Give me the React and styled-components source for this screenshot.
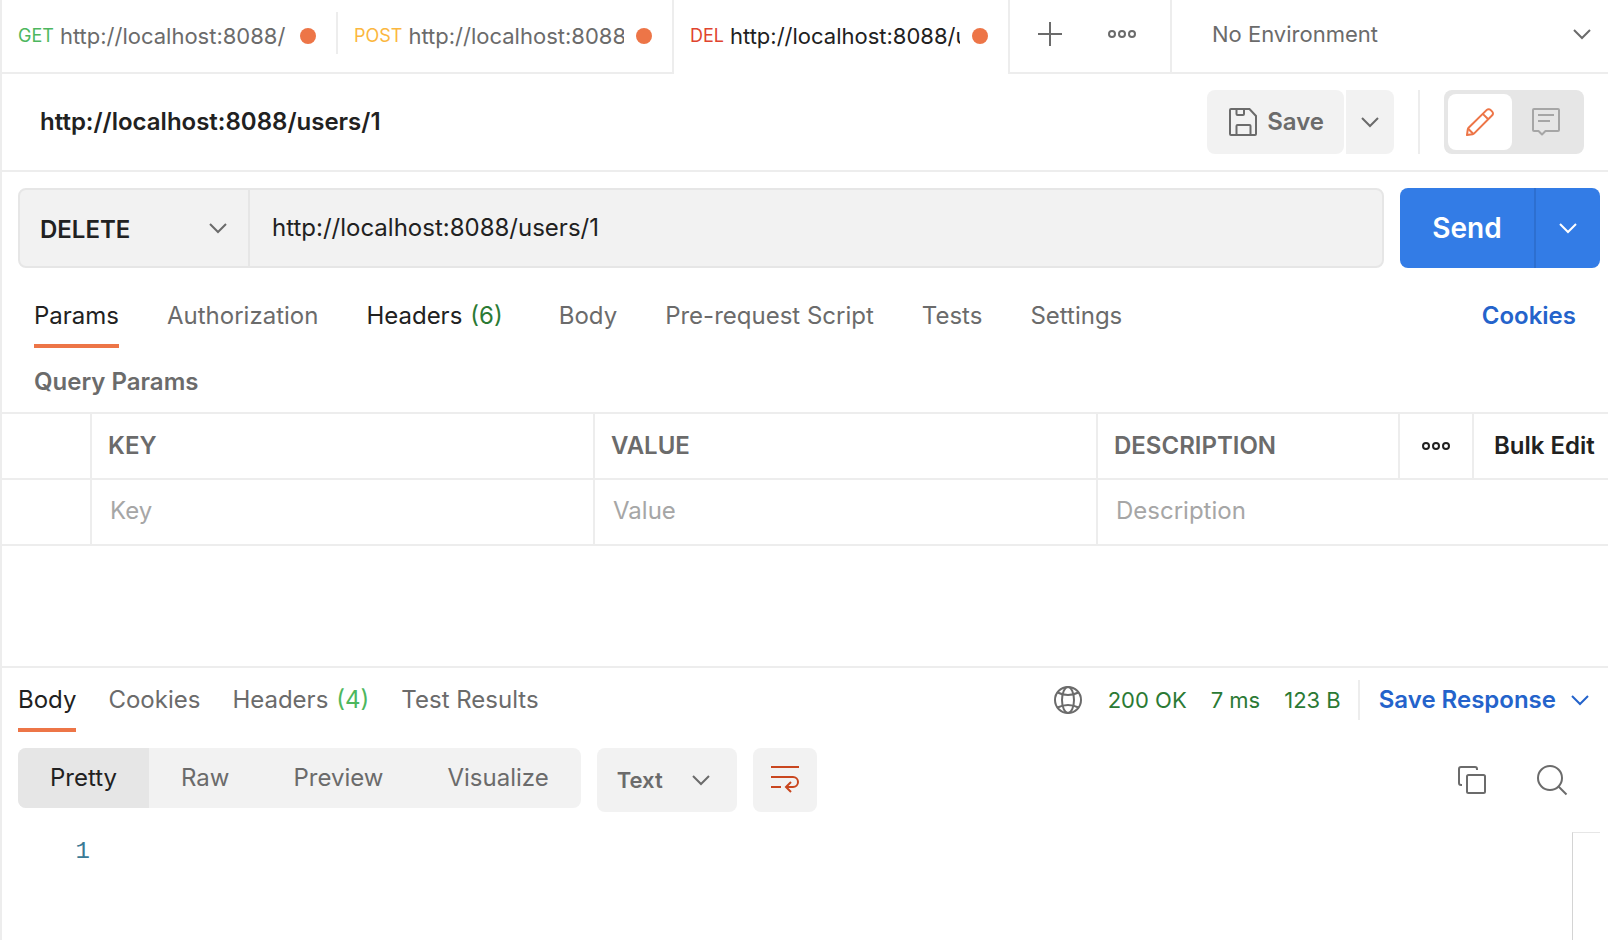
import { useState } from "react";
import styled, { createGlobalStyle } from "styled-components";

const GlobalStyle = createGlobalStyle`
  * {
    box-sizing: border-box;
  }
  body {
    margin: 0;
    background-color: #ffffff;
  }
  body, button, input, select, textarea {
    font-family: "Inter", "Liberation Sans", sans-serif;
    font-size: 24px;
    line-height: 32px;
    color: #212121;
  }
  button, input, select, textarea {
    margin: 0;
    padding: 0;
    border: none;
    border-radius: 0;
    outline: none;
    background-color: transparent;
  }
  button, select {
    cursor: pointer;
  }
  svg {
    display: block;
    flex-shrink: 0;
  }
`;

const Page = styled.div`
  min-height: 100vh;
  display: flex;
  flex-direction: column;
  border-left: 2px solid #ededed;
`;

/* ---------- top bar ---------- */

const TopBar = styled.header`
  display: flex;
  height: 74px;
`;

const Tab = styled.div`
  flex: 0 1 336px;
  min-width: 0;
  display: flex;
  box-shadow: ${(props) => (props.$active ? "none" : "inset 0 -2px #ededed")};
`;

const TabButton = styled.button`
  flex: 1;
  min-width: 0;
  display: flex;
  align-items: center;
  margin-bottom: 2px;
  padding: 0 20px 0 16px;
`;

const TabMethod = styled.span`
  font-size: 18px;
  color: ${(props) => props.$color};
`;

const TabUrl = styled.span`
  flex: 1;
  min-width: 0;
  margin: 0 12px 0 6px;
  overflow: hidden;
  white-space: nowrap;
  text-align: left;
  font-size: 22px;
  color: ${(props) => (props.$active ? "#212121" : "#6b6b6b")};
`;

const UnsavedDot = styled.span`
  width: 16px;
  height: 16px;
  border-radius: 50%;
  background-color: #ed7547;
`;

const TabDivider = styled.span`
  width: 2px;
  margin: ${(props) => (props.$short ? "12px 0 20px" : "0")};
  background-color: #ededed;
`;

const TabActions = styled.div`
  display: flex;
  align-items: center;
  gap: 24px;
  padding: 0 24px 4px 16px;
  border-right: 2px solid #ededed;
  border-bottom: 2px solid #ededed;
`;

const SmallIconButton = styled.button`
  width: 48px;
  height: 48px;
  display: flex;
  align-items: center;
  justify-content: center;
  color: #6b6b6b;
`;

const EnvironmentArea = styled.div`
  flex: 1;
  display: flex;
  padding-bottom: 4px;
  border-bottom: 2px solid #ededed;
`;

/* a native select with the chevron laid on its right end */
const SelectBox = styled.div`
  flex: ${(props) => (props.$grow ? 1 : "none")};
  display: grid;
  align-items: center;
  color: #6b6b6b;

  select,
  svg {
    grid-area: 1 / 1;
  }
  svg {
    justify-self: end;
    margin-right: ${(props) => props.$inset}px;
    pointer-events: none;
  }
`;

const EnvironmentSelect = styled.select`
  width: 100%;
  height: 100%;
  padding-left: 40px;
  appearance: none;
  font-size: 22px;
  color: #6b6b6b;
`;

/* ---------- request ---------- */

const RequestHeader = styled.div`
  display: flex;
  align-items: center;
  gap: 24px;
  height: 98px;
  padding: 0 24px 0 38px;
  border-bottom: 2px solid #ededed;
`;

const RequestTitle = styled.h1`
  flex: 1;
  margin: 0;
  font-size: 24px;
  font-weight: 600;
`;

const SaveGroup = styled.div`
  display: flex;
  gap: 2px;
`;

const SaveButton = styled.button`
  display: flex;
  align-items: center;
  gap: 8px;
  height: 64px;
  padding: 0 20px;
  border-radius: 8px;
  background-color: #f2f2f2;
  color: #6b6b6b;
  font-weight: 600;
`;

const SaveMore = styled.button`
  width: 48px;
  display: flex;
  align-items: center;
  justify-content: center;
  border-radius: 0 8px 8px 0;
  background-color: #f2f2f2;
  color: #6b6b6b;
`;

const HeaderDivider = styled.span`
  width: 2px;
  height: 64px;
  background-color: #ededed;
`;

const ModeToggle = styled.div`
  display: flex;
  width: 140px;
  height: 64px;
  padding: 4px;
  border-radius: 8px;
  background-color: #e6e6e6;
`;

const ModeButton = styled.button`
  flex: ${(props) => (props.$active ? "0 0 64px" : 1)};
  display: flex;
  align-items: center;
  justify-content: center;
  border-radius: 8px;
  background-color: ${(props) => (props.$active ? "#ffffff" : "transparent")};
  color: ${(props) => (props.$active ? "#ed7547" : "#a6a6a6")};
`;

const UrlRow = styled.form`
  display: flex;
  gap: 16px;
  padding: 16px 8px 16px 16px;
`;

const UrlBox = styled.div`
  flex: 1;
  display: flex;
  height: 80px;
  border: 2px solid #e6e6e6;
  border-radius: 8px;
  background-color: #f2f2f2;
`;

const MethodSelect = styled.select`
  width: 230px;
  height: 100%;
  padding: 4px 0 0 20px;
  border-right: 2px solid #e6e6e6;
  appearance: none;
  font-weight: 600;
`;

const UrlInput = styled.input`
  flex: 1;
  min-width: 0;
  padding: 0 22px;
`;

const SendGroup = styled.div`
  display: flex;
  border-radius: 8px;
  overflow: hidden;
  background-color: #337ce6;
`;

const SendButton = styled.button`
  width: 134px;
  color: #ffffff;
  font-size: 28px;
  font-weight: 600;
`;

const SendMore = styled.button`
  width: 66px;
  display: flex;
  align-items: center;
  justify-content: center;
  border-left: 2px solid #2d6fd0;
  color: #ffffff;
`;

const TabNav = styled.nav`
  display: flex;
  gap: ${(props) => props.$gap}px;
`;

const NavTab = styled.button`
  padding: 16px 0 12px;
  border-bottom: 4px solid
    ${(props) => (props.$active ? "#ed7547" : "transparent")};
  white-space: nowrap;
  color: ${(props) => (props.$active || props.$filled ? "#212121" : "#6b6b6b")};
`;

const Count = styled.span`
  margin: 0 ${(props) => (props.$wide ? 8 : 0)}px 0 8px;
  color: ${(props) => props.$color};
`;

const RequestTabs = styled.div`
  display: flex;
  justify-content: space-between;
  padding: 0 32px;
`;

const CookiesLink = styled.a`
  padding-top: 16px;
  font-weight: 600;
  text-decoration: none;
  color: #2463cb;
`;

const SectionTitle = styled.h2`
  margin: 0;
  padding: 18px 32px 14px;
  font-size: 24px;
  font-weight: 600;
  color: #6b6b6b;
`;

const ParamsTable = styled.table`
  width: 100%;
  margin-bottom: 120px;
  table-layout: fixed;
  border-spacing: 0;
  border-top: 2px solid #ededed;
`;

const Col = styled.col`
  width: ${(props) => (props.$width ? props.$width + "px" : "auto")};
`;

const HeadCell = styled.th`
  height: 66px;
  padding: ${(props) => (props.$plain ? "0" : "0 16px")};
  border-right: ${(props) => (props.$last ? "none" : "2px solid #ededed")};
  border-bottom: 2px solid #ededed;
  text-align: left;
  font-weight: 600;
  color: #6b6b6b;
`;

const BodyCell = styled.td`
  height: 66px;
  padding: 0;
  border-right: ${(props) => (props.$last ? "none" : "2px solid #ededed")};
  border-bottom: 2px solid #ededed;
`;

const CellInput = styled.input`
  display: block;
  width: 100%;
  height: 64px;
  padding: 0 18px 4px;

  &::placeholder {
    color: #a6a6a6;
    opacity: 1;
  }
`;

const ColumnsButton = styled.button`
  width: 100%;
  height: 64px;
  display: flex;
  align-items: center;
  justify-content: center;
  color: #212121;
`;

const BulkEdit = styled.button`
  padding-left: 20px;
  font-weight: 600;
  white-space: nowrap;
`;

/* ---------- response ---------- */

const Response = styled.section`
  flex: 1;
  display: flex;
  flex-direction: column;
  border-top: 2px solid #ededed;
`;

const ResponseTabs = styled.div`
  display: flex;
  justify-content: space-between;
  padding: 0 19px 0 16px;
`;

const ResponseMeta = styled.div`
  display: flex;
  align-items: center;
  height: 64px;
  gap: 24px;
  font-size: 22px;
  color: #6b6b6b;
`;

const Status = styled.span`
  white-space: nowrap;
  color: #2b7a34;
`;

const SaveResponse = styled.button`
  display: flex;
  align-items: center;
  gap: 15px;
  height: 40px;
  margin-left: -7px;
  padding-left: 19px;
  border-left: 2px solid #ededed;
  font-weight: 600;
  white-space: nowrap;
  color: #2463cb;
`;

const Toolbar = styled.div`
  display: flex;
  gap: 16px;
  padding: 16px 24px 20px 16px;
`;

const ViewSwitch = styled.div`
  display: flex;
  height: 60px;
  border-radius: 8px;
  overflow: hidden;
  background-color: #f2f2f2;
`;

const ViewButton = styled.button`
  padding: 0 32px;
  background-color: ${(props) => (props.$active ? "#e6e6e6" : "transparent")};
  color: ${(props) => (props.$active ? "#212121" : "#6b6b6b")};
`;

const FormatSelect = styled.select`
  width: 140px;
  height: 64px;
  padding-left: 20px;
  border-radius: 8px;
  background-color: #f2f2f2;
  appearance: none;
  font-size: 22px;
  font-weight: 600;
  color: #6b6b6b;
`;

const ToolButton = styled.button`
  width: 64px;
  height: 64px;
  display: flex;
  align-items: center;
  justify-content: center;
  border-radius: 8px;
  background-color: ${(props) => (props.$on ? "#f2f2f2" : "transparent")};
  color: ${(props) => (props.$on ? "#c9471f" : "#6b6b6b")};
`;

const Spacer = styled.span`
  flex: 1;
`;

const Editor = styled.div`
  flex: 1;
  display: flex;
  padding-right: 8px;
`;

const LineNumber = styled.span`
  width: 88px;
  text-align: right;
  font-family: "Liberation Mono", monospace;
  line-height: 40px;
  color: #3b7a95;
`;

const OverviewRuler = styled.div`
  width: 28px;
  margin-left: auto;
  border-top: 1px solid #e6e6e6;
  border-left: 1px solid #d4d4d4;
`;

/* ---------- icons ---------- */

function Icon({ children, box = "-2 -2 32 32", width = 32, height = 32 }) {
  return (
    <svg
      width={width}
      height={height}
      viewBox={box}
      fill="none"
      stroke="currentColor"
      strokeWidth="2"
      aria-hidden="true"
    >
      {children}
    </svg>
  );
}

const Chevron = () => (
  <Icon box="0 0 18 12" width={18} height={12}>
    <path d="M1 2l8 8 8-8" />
  </Icon>
);

const Dots = () => (
  <Icon box="0 0 28 8" width={28} height={8}>
    <circle cx="4" cy="4" r="3" />
    <circle cx="14" cy="4" r="3" />
    <circle cx="24" cy="4" r="3" />
  </Icon>
);

const PlusIcon = () => (
  <Icon box="0 0 24 24" width={24} height={24}>
    <path d="M12 0v24M0 12h24" />
  </Icon>
);

const SaveIcon = () => (
  <Icon>
    <path d="M2 1h18.500L27 8v18a1 1 0 0 1-1 1H2a1 1 0 0 1-1-1V2a1 1 0 0 1 1-1z" />
    <path d="M7.500 1v5a1 1 0 0 0 1 1H14a1 1 0 0 0 1-1V1" />
    <path d="M7.500 27v-9a1 1 0 0 1 1-1h12a1 1 0 0 1 1 1v9" />
  </Icon>
);

const PencilIcon = () => (
  <Icon>
    <path
      d="M1 27l.8-5.600a3 3 0 0 1 .8-1.600L20.800 1.900a2.600 2.600 0 0 1 3.700 0l1.700 1.700a2.600 2.600 0 0 1 0 3.700L8.200 25.400a3 3 0 0 1-1.600.8z"
      strokeLinejoin="round"
    />
    <path d="M16.800 5.900l5.400 5.400M2.200 20.800l5 5" />
  </Icon>
);

const CommentIcon = () => (
  <Icon>
    <path
      d="M2 1h24a1 1 0 0 1 1 1v20a1 1 0 0 1-1 1H13.500L10 26.500 6.500 23H2a1 1 0 0 1-1-1V2a1 1 0 0 1 1-1z"
      strokeLinejoin="round"
    />
    <path d="M6 7h16M6 13h12" />
  </Icon>
);

const GlobeIcon = () => (
  <Icon>
    <circle cx="14" cy="14" r="13" />
    <ellipse cx="14" cy="14" rx="6" ry="13" />
    <path d="M3.500 6.500Q14 11.500 24.500 6.500M3.500 21.500Q14 16.500 24.500 21.500" />
  </Icon>
);

const WrapIcon = () => (
  <Icon>
    <path d="M0 1h28M0 11h22a5 5 0 0 1 0 10h-7M0 21h10" />
    <path d="M20 16l-5 5 5 5" />
  </Icon>
);

const CopyIcon = () => (
  <Icon>
    <path d="M4 19H3a2 2 0 0 1-2-2V3a2 2 0 0 1 2-2h14a2 2 0 0 1 2 2v1" />
    <rect x="9" y="9" width="18" height="18" rx="1.500" />
  </Icon>
);

const SearchIcon = () => (
  <Icon box="-1 -1 32 32">
    <circle cx="13" cy="13" r="12" />
    <path d="M21.500 21.500l8 8" />
  </Icon>
);

/* ---------- data ---------- */

const tabs = [
  { method: "GET", color: "#4db75e", url: "http://localhost:8088/" },
  { method: "POST", color: "#fbb740", url: "http://localhost:8088/users" },
  { method: "DEL", color: "#e0442f", url: "http://localhost:8088/users/1" },
];

const requestTabs = [
  { name: "Params" },
  { name: "Authorization" },
  { name: "Headers", count: 6 },
  { name: "Body" },
  { name: "Pre-request Script" },
  { name: "Tests" },
  { name: "Settings" },
];

const responseTabs = [
  { name: "Body" },
  { name: "Cookies" },
  { name: "Headers", count: 4 },
  { name: "Test Results" },
];

const views = ["Pretty", "Raw", "Preview", "Visualize"];

function App() {
  const [activeTab, setActiveTab] = useState(2);
  const [requestTab, setRequestTab] = useState("Params");
  const [responseTab, setResponseTab] = useState("Body");
  const [view, setView] = useState("Pretty");
  const [url, setUrl] = useState("http://localhost:8088/users/1");

  return (
    <>
      <GlobalStyle />
      <Page>
        <TopBar>
          {tabs.map((tab, index) => (
            <Tab key={tab.method} $active={index === activeTab}>
              <TabButton onClick={() => setActiveTab(index)}>
                <TabMethod $color={tab.color}>{tab.method}</TabMethod>
                <TabUrl $active={index === activeTab}>{tab.url}</TabUrl>
                <UnsavedDot />
              </TabButton>
              <TabDivider
                $short={index !== activeTab && index + 1 !== activeTab}
              />
            </Tab>
          ))}
          <TabActions>
            <SmallIconButton aria-label="New tab">
              <PlusIcon />
            </SmallIconButton>
            <SmallIconButton aria-label="Tab options">
              <Dots />
            </SmallIconButton>
          </TabActions>
          <EnvironmentArea>
            <SelectBox $grow $inset={17}>
              <EnvironmentSelect aria-label="Environment">
                <option>No Environment</option>
              </EnvironmentSelect>
              <Chevron />
            </SelectBox>
          </EnvironmentArea>
        </TopBar>

        <RequestHeader>
          <RequestTitle>http://localhost:8088/users/1</RequestTitle>
          <SaveGroup>
            <SaveButton>
              <SaveIcon />
              Save
            </SaveButton>
            <SaveMore aria-label="Save options">
              <Chevron />
            </SaveMore>
          </SaveGroup>
          <HeaderDivider />
          <ModeToggle>
            <ModeButton $active aria-label="Edit">
              <PencilIcon />
            </ModeButton>
            <ModeButton aria-label="Comments">
              <CommentIcon />
            </ModeButton>
          </ModeToggle>
        </RequestHeader>

        <UrlRow onSubmit={(e) => e.preventDefault()}>
          <UrlBox>
            <SelectBox $inset={23}>
              <MethodSelect aria-label="Method" defaultValue="DELETE">
                <option>GET</option>
                <option>POST</option>
                <option>DELETE</option>
              </MethodSelect>
              <Chevron />
            </SelectBox>
            <UrlInput
              aria-label="Request URL"
              value={url}
              onChange={(e) => setUrl(e.target.value)}
            />
          </UrlBox>
          <SendGroup>
            <SendButton type="submit">Send</SendButton>
            <SendMore type="button" aria-label="Send options">
              <Chevron />
            </SendMore>
          </SendGroup>
        </UrlRow>

        <RequestTabs>
          <TabNav $gap={48}>
            {requestTabs.map((tab) => (
              <NavTab
                key={tab.name}
                $active={tab.name === requestTab}
                $filled={tab.count > 0}
                onClick={() => setRequestTab(tab.name)}
              >
                {tab.name}
                {tab.count && (
                  <Count $wide $color="#2b7a34">
                    ({tab.count})
                  </Count>
                )}
              </NavTab>
            ))}
          </TabNav>
          <CookiesLink href="#cookies">Cookies</CookiesLink>
        </RequestTabs>

        <SectionTitle>Query Params</SectionTitle>
        <ParamsTable>
          <colgroup>
            <Col $width={90} />
            <Col />
            <Col />
            <Col $width={302} />
            <Col $width={74} />
            <Col $width={134} />
          </colgroup>
          <thead>
            <tr>
              <HeadCell />
              <HeadCell>KEY</HeadCell>
              <HeadCell>VALUE</HeadCell>
              <HeadCell>DESCRIPTION</HeadCell>
              <HeadCell $plain>
                <ColumnsButton aria-label="Columns">
                  <Dots />
                </ColumnsButton>
              </HeadCell>
              <HeadCell $plain $last>
                <BulkEdit>Bulk Edit</BulkEdit>
              </HeadCell>
            </tr>
          </thead>
          <tbody>
            <tr>
              <BodyCell />
              <BodyCell>
                <CellInput aria-label="Key" placeholder="Key" />
              </BodyCell>
              <BodyCell>
                <CellInput aria-label="Value" placeholder="Value" />
              </BodyCell>
              <BodyCell colSpan={3} $last>
                <CellInput aria-label="Description" placeholder="Description" />
              </BodyCell>
            </tr>
          </tbody>
        </ParamsTable>

        <Response>
          <ResponseTabs>
            <TabNav $gap={32}>
              {responseTabs.map((tab) => (
                <NavTab
                  key={tab.name}
                  $active={tab.name === responseTab}
                  onClick={() => setResponseTab(tab.name)}
                >
                  {tab.name}
                  {tab.count && <Count $color="#4db75e">({tab.count})</Count>}
                </NavTab>
              ))}
            </TabNav>
            <ResponseMeta>
              <GlobeIcon />
              <Status>200 OK</Status>
              <Status>7 ms</Status>
              <Status>123 B</Status>
              <SaveResponse>
                Save Response
                <Chevron />
              </SaveResponse>
            </ResponseMeta>
          </ResponseTabs>

          <Toolbar>
            <ViewSwitch>
              {views.map((name) => (
                <ViewButton
                  key={name}
                  $active={name === view}
                  onClick={() => setView(name)}
                >
                  {name}
                </ViewButton>
              ))}
            </ViewSwitch>
            <SelectBox $inset={27}>
              <FormatSelect aria-label="Format">
                <option>Text</option>
              </FormatSelect>
              <Chevron />
            </SelectBox>
            <ToolButton $on aria-label="Wrap lines">
              <WrapIcon />
            </ToolButton>
            <Spacer />
            <ToolButton aria-label="Copy">
              <CopyIcon />
            </ToolButton>
            <ToolButton aria-label="Search">
              <SearchIcon />
            </ToolButton>
          </Toolbar>

          <Editor>
            <LineNumber>1</LineNumber>
            <OverviewRuler />
          </Editor>
        </Response>
      </Page>
    </>
  );
}

export default App;
